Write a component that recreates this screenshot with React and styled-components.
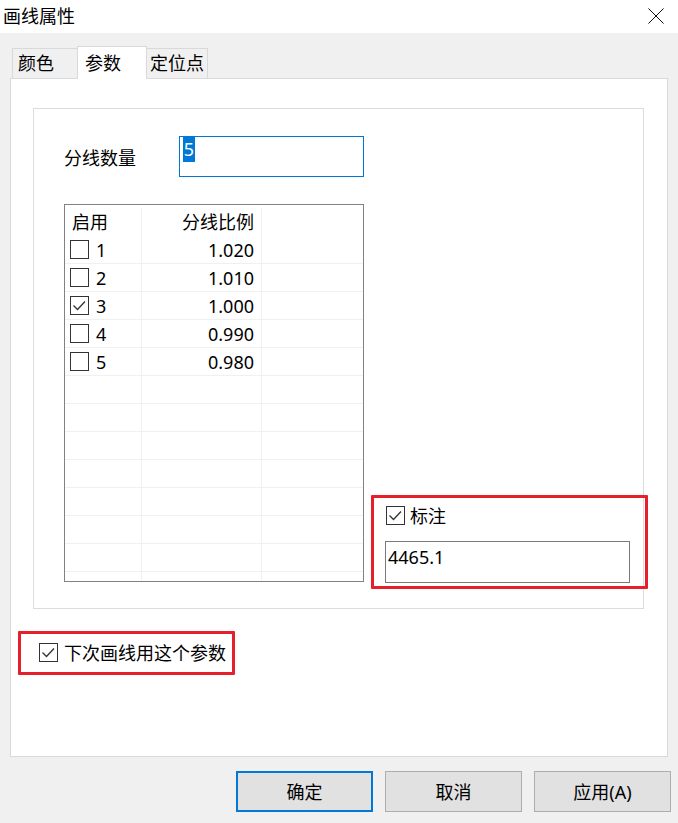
import styled, { createGlobalStyle } from 'styled-components'

const GlobalStyle = createGlobalStyle`
  * { box-sizing: border-box; }
  body {
    margin: 0;
    background: #f0f0f0;
    font-family: "Noto Sans", "Noto Sans CJK SC", sans-serif;
    color: #000;
  }
`

const rows = [
  { id: 1, ratio: '1.020', on: false },
  { id: 2, ratio: '1.010', on: false },
  { id: 3, ratio: '1.000', on: true },
  { id: 4, ratio: '0.990', on: false },
  { id: 5, ratio: '0.980', on: false },
]

const tabs = [
  { label: '颜色', width: 66, pad: 5 },
  { label: '参数', width: 70, pad: 7, active: true },
  { label: '定位点', width: 62, pad: 3 },
]

const CheckBox = ({ checked }) => (
  <Box>
    {checked && (
      <svg width="17" height="17" viewBox="0 0 17 17">
        <path d="M2.5 8.5 L6.5 12.5 L14 4.5" fill="none" stroke="#333" strokeWidth="1.3" />
      </svg>
    )}
  </Box>
)

const App = () => {
  const filler = Array.from({ length: 8 })
  return (
    <Window>
      <GlobalStyle />
      <TitleBar>
        <Title>画线属性</Title>
        <svg width="16" height="16" viewBox="0 0 16 16">
          <path d="M0.5 0.5 L15.5 15.5 M15.5 0.5 L0.5 15.5" stroke="#111" strokeWidth="1" />
        </svg>
      </TitleBar>
      <Body>
        <TabStrip>
          {tabs.map((t, i) => (
            <Tab key={t.label} $w={t.width} $pad={t.pad} $active={t.active} $first={i === 0}>
              {t.label}
            </Tab>
          ))}
        </TabStrip>
        <Panel>
          <GroupBox>
            <FieldRow>
              <Label>分线数量</Label>
              <TextBox $focus $w={185} $h={41}>
                <Selected>5</Selected>
              </TextBox>
            </FieldRow>
            <List>
              <HeaderRow>
                <Cell $pl={7}>启用</Cell>
                <Cell $right>分线比例</Cell>
                <Cell />
              </HeaderRow>
              {rows.map((r) => (
                <Row key={r.id}>
                  <Cell $pl={5}>
                    <CheckBox checked={r.on} />
                    <Num>{r.id}</Num>
                  </Cell>
                  <Cell $right>{r.ratio}</Cell>
                  <Cell />
                </Row>
              ))}
              {filler.map((_, i) => (
                <Row key={'f' + i}>
                  <Cell />
                  <Cell />
                  <Cell />
                </Row>
              ))}
            </List>
            <Annotate>
              <Highlight $t={-11} $l={-14} $r={-18} $b={-6} />
              <CheckRow>
                <CheckBox checked />
                <span>标注</span>
              </CheckRow>
              <TextBox $w={245} $h={42}>4465.1</TextBox>
            </Annotate>
          </GroupBox>
          <OptionRow>
            <Highlight $t={-12} $l={-21} $r={-9} $b={-13} />
            <CheckBox checked />
            <span>下次画线用这个参数</span>
          </OptionRow>
        </Panel>
        <Footer>
          <Button $default>确定</Button>
          <Button>取消</Button>
          <Button>应用(A)</Button>
        </Footer>
      </Body>
    </Window>
  )
}

const Window = styled.div`
  width: 678px;
  height: 823px;
  background: #f0f0f0;
  display: flex;
  flex-direction: column;
  font-size: 18px;
`

const TitleBar = styled.div`
  height: 33px;
  background: #fff;
  display: flex;
  align-items: center;
  justify-content: space-between;
  padding: 0 14px 0 3px;
  svg { margin-top: -2px; }
`

const Title = styled.div`
  font-size: 18px;
  line-height: 20px;
  margin-top: -2px;
`

const Body = styled.div`
  flex: 1;
  display: flex;
  flex-direction: column;
  padding: 13px 10px 0 10px;
`

const TabStrip = styled.div`
  display: flex;
  align-items: flex-end;
  height: 32px;
  padding-left: 2px;
  position: relative;
  z-index: 1;
`

const Tab = styled.div`
  width: ${(p) => p.$w}px;
  height: ${(p) => (p.$active ? 33 : 30)}px;
  margin-bottom: ${(p) => (p.$active ? -1 : 0)}px;
  margin-left: ${(p) => (p.$first ? 0 : -1)}px;
  padding-left: ${(p) => p.$pad}px;
  padding-top: ${(p) => (p.$active ? 2 : 0)}px;
  border: 1px solid #d9d9d9;
  border-bottom: none;
  background: ${(p) => (p.$active ? '#fff' : '#f0f0f0')};
  position: relative;
  z-index: ${(p) => (p.$active ? 2 : 1)};
  line-height: 28px;
  white-space: nowrap;
`

const Panel = styled.div`
  height: 679px;
  background: #fff;
  border: 1px solid #d9d9d9;
  padding: 29px 0 0 22px;
`

const GroupBox = styled.div`
  width: 611px;
  height: 501px;
  border: 1px solid #dcdcdc;
  padding: 27px 0 0 30px;
  display: grid;
  grid-template-columns: 300px 245px;
  grid-template-rows: auto 1fr;
  column-gap: 21px;
`

const FieldRow = styled.div`
  grid-column: 1 / 3;
  display: flex;
  align-items: center;
`

const Label = styled.div`
  width: 115px;
  line-height: 24px;
  margin-top: 2px;
`

const TextBox = styled.div`
  width: ${(p) => p.$w}px;
  height: ${(p) => p.$h}px;
  border: 1px solid ${(p) => (p.$focus ? '#0078d7' : '#7a7a7a')};
  background: #fff;
  padding: ${(p) => (p.$focus ? '0 0 0 3px' : '3px 0 0 2px')};
  line-height: 24px;
`

const Selected = styled.span`
  display: inline-block;
  background: #0078d7;
  color: #fff;
  width: 12px;
  height: 25px;
  line-height: 25px;
  text-align: center;
`

const List = styled.div`
  margin-top: 27px;
  width: 300px;
  height: 378px;
  border: 1px solid #828282;
  overflow: hidden;
  align-self: start;
`

const HeaderRow = styled.div`
  display: grid;
  grid-template-columns: 77px 120px 1fr;
  height: 31px;
  padding-top: 3px;
`

const Row = styled.div`
  display: grid;
  grid-template-columns: 77px 120px 1fr;
  height: 28px;
  border-bottom: 1px solid #f0f0f0;
`

const Cell = styled.div`
  display: flex;
  align-items: center;
  justify-content: ${(p) => (p.$right ? 'flex-end' : 'flex-start')};
  padding-left: ${(p) => p.$pl || 0}px;
  padding-right: ${(p) => (p.$right ? 7 : 0)}px;
  border-right: 1px solid #f0f0f0;
  line-height: 24px;
  &:last-child { border-right: none; }
`

const Box = styled.span`
  width: 19px;
  height: 19px;
  border: 1px solid #333;
  background: #fff;
  display: inline-flex;
  align-items: center;
  justify-content: center;
  flex: none;
`

const Num = styled.span`
  margin-left: 7px;
`

const Annotate = styled.div`
  grid-column: 2;
  grid-row: 2;
  align-self: end;
  margin-bottom: 25px;
  position: relative;
`

const CheckRow = styled.div`
  display: flex;
  align-items: center;
  gap: 5px;
  margin-left: 1px;
  height: 19px;
  margin-bottom: 16px;
  line-height: 24px;
`

const Highlight = styled.div`
  position: absolute;
  top: ${(p) => p.$t}px;
  left: ${(p) => p.$l}px;
  right: ${(p) => p.$r}px;
  bottom: ${(p) => p.$b}px;
  border: 3px solid #e5202a;
  border-radius: 1px;
  pointer-events: none;
`

const OptionRow = styled.div`
  position: relative;
  display: inline-flex;
  align-items: center;
  gap: 6px;
  margin: 34px 0 0 6px;
  height: 19px;
  line-height: 24px;
`

const Footer = styled.div`
  display: flex;
  justify-content: flex-end;
  gap: 12px;
  padding: 14px 7px 0 0;
  margin-right: -10px;
`

const Button = styled.button`
  width: 137px;
  height: 41px;
  background: #e1e1e1;
  border: ${(p) => (p.$default ? '2px solid #0078d7' : '1px solid #adadad')};
  font-family: inherit;
  font-size: 18px;
  color: #000;
  padding: 0;
  line-height: 24px;
`

export default App
